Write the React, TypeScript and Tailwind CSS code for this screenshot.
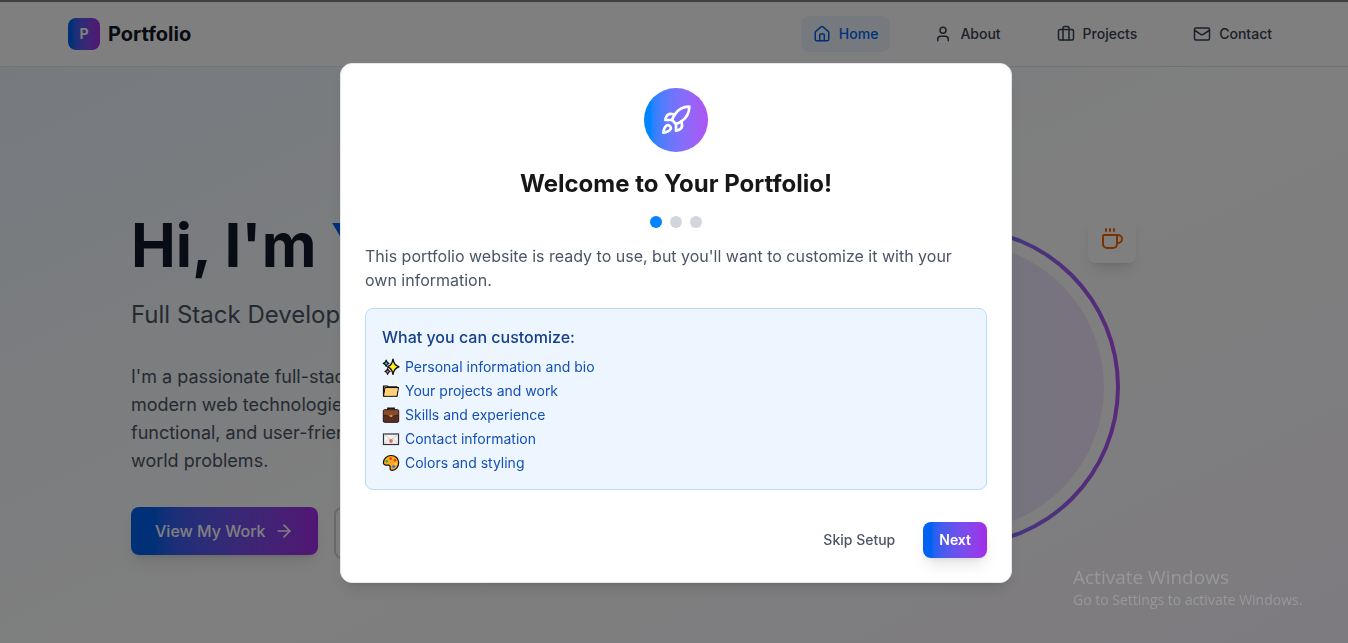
import type { ReactNode } from "react";
import { ArrowRight, Briefcase, Coffee, House, Mail, Rocket, User } from "lucide-react";
import type { LucideIcon } from "lucide-react";

type NavItem = { label: string; href: string; icon: LucideIcon; active?: boolean };

const navItems: NavItem[] = [
  { label: "Home", href: "#home", icon: House, active: true },
  { label: "About", href: "#about", icon: User },
  { label: "Projects", href: "#projects", icon: Briefcase },
  { label: "Contact", href: "#contact", icon: Mail },
];

function Glyph({ children }: { children: ReactNode }) {
  return (
    <svg viewBox="0 0 18 18" className="size-[18px] shrink-0" aria-hidden="true">
      {children}
    </svg>
  );
}

function SparklesGlyph() {
  return (
    <Glyph>
      <path d="M11 1.2c.7 4.6 2 6.500 6 7.600-4 1.100-5.300 3-6 7.600-.7-4.600-2-6.500-5.600-7.600 3.600-1.100 4.900-3 5.600-7.600Z" fill="#ffee1f" stroke="#111" strokeWidth="1.400" strokeLinejoin="round" />
      <path d="M4.200 2.200c.4 2 1 2.700 2.700 3.100-1.700.4-2.300 1.200-2.700 3.100C3.800 6.500 3.100 5.700 1.300 5.300c1.800-.4 2.500-1.100 2.900-3.100Z" fill="#2cc4f0" stroke="#111" strokeWidth="1.200" strokeLinejoin="round" />
      <path d="M5.600 10.600c.4 1.900 1 2.500 2.500 2.900-1.500.4-2.100 1-2.500 2.900-.4-1.900-1.100-2.500-2.700-2.900 1.600-.4 2.300-1 2.700-2.900Z" fill="#f25aa8" stroke="#111" strokeWidth="1.200" strokeLinejoin="round" />
    </Glyph>
  );
}

function FolderGlyph() {
  return (
    <Glyph>
      <path d="M1.500 4h3.800l1 .9h8.700v9.100H1.500Z" fill="#e8a33d" stroke="#111" strokeWidth="1.200" strokeLinejoin="round" />
      <path d="M3 5.600h13.500l-1.600 8.600H1.700Z" fill="#ffd07a" stroke="#111" strokeWidth="1.100" strokeLinejoin="round" />
      <path d="M3.600 6.200h12.200l-1.400 7.400H2.300Z" fill="#ffd07a" />
    </Glyph>
  );
}

function BriefcaseGlyph() {
  return (
    <Glyph>
      <path d="M5.800 4V2.200h6.400V4" fill="none" stroke="#24140f" strokeWidth="1.400" />
      <rect x="1.300" y="3.700" width="15.400" height="12.600" rx="1.200" fill="#5a2d22" stroke="#24140f" strokeWidth="1" />
      <path d="M1.800 4.200h14.400v4.600L9 10.600 1.800 8.800Z" fill="#8a4a2c" />
      <path d="M1.800 9 9 10.800 16.200 9" fill="none" stroke="#3a1a12" strokeWidth=".8" />
      <rect x="7.600" y="9.300" width="2.800" height="1.500" fill="#f7b32b" />
    </Glyph>
  );
}

function EnvelopeGlyph() {
  return (
    <Glyph>
      <rect x="1.500" y="4" width="15" height="10.500" fill="#f4f4f4" stroke="#2f2f2f" strokeWidth="1.200" />
      <path d="m2 4.600 7 5.200 7-5.200M2 14l5-5.500M16 14l-5-5.500" fill="none" stroke="#c4c4c4" strokeWidth=".8" />
      <circle cx="9" cy="11" r="1.900" fill="#f2665c" />
    </Glyph>
  );
}

function PaletteGlyph() {
  return (
    <Glyph>
      <path d="M9.200 1.500c4.300 0 7.500 3 7.500 7.100 0 4.300-3 7.700-6.500 7.700-1.700 0-2.400-1.100-2.100-2.600.3-1.600-.3-2.600-2-2.600-3 .2-4.700-.5-4.700-2.400 0-3.800 3.500-7.200 7.800-7.200Z" fill="#fba91b" stroke="#111" strokeWidth="1.200" />
      <circle cx="4.800" cy="7.200" r="1.300" fill="#2fae4e" />
      <circle cx="8.700" cy="4.600" r="1.300" fill="#e2382f" />
      <circle cx="13" cy="6.300" r="1.300" fill="#e2382f" />
      <circle cx="13.600" cy="9.700" r="1.200" fill="#f9dc4a" />
      <circle cx="11.600" cy="12.500" r="1.500" fill="#2b74e2" />
    </Glyph>
  );
}

const customizations = [
  { label: "Personal information and bio", Icon: SparklesGlyph },
  { label: "Your projects and work", Icon: FolderGlyph },
  { label: "Skills and experience", Icon: BriefcaseGlyph },
  { label: "Contact information", Icon: EnvelopeGlyph },
  { label: "Colors and styling", Icon: PaletteGlyph },
];

function Header() {
  return (
    <header className="border-b border-gray-200 bg-white pl-1">
      <div className="mx-auto flex h-16 max-w-7xl items-center justify-between px-8">
        <a href="#home" className="flex items-center gap-2">
          <span className="flex size-8 items-center justify-center rounded-lg bg-linear-to-r from-[#0062f0] from-13% to-[#a32be8] text-sm font-bold text-white">
            P
          </span>
          <span className="text-xl font-bold text-gray-900">Portfolio</span>
        </a>
        <nav className="flex items-center gap-8" aria-label="Main">
          {navItems.map(({ label, href, icon: Icon, active }) => (
            <a
              key={label}
              href={href}
              aria-current={active ? "page" : undefined}
              className={
                active
                  ? "flex items-center gap-2 rounded-lg bg-[#edf5ff] px-3 py-2 text-sm font-medium text-[#0062f0]"
                  : "flex items-center gap-2 rounded-lg px-3 py-2 text-sm font-medium text-gray-700"
              }
            >
              <Icon size={18} aria-hidden="true" />
              {label}
            </a>
          ))}
        </nav>
      </div>
    </header>
  );
}

function Hero() {
  return (
    <section className="flex min-h-screen items-center bg-linear-to-br from-[#edf5ff] via-white to-purple-50 pb-1 pl-1">
      <div className="mx-auto grid w-full max-w-[1090px] grid-cols-2 items-center gap-[46px]">
        <div>
          <h1 className="mb-6 text-6xl font-bold whitespace-nowrap text-gray-900">
            Hi, I'm{" "}
            <span className="bg-linear-to-r from-[#0062f0] from-13% to-[#a32be8] bg-clip-text text-transparent">Your</span>
          </h1>
          <p className="mb-8 text-2xl text-gray-600">Full Stack Developer</p>
          <p className="mb-8 text-lg leading-7 text-gray-600">
            I'm a passionate full-stack developer who loves building
            <br />
            modern web technologies. I enjoy creating beautiful,
            <br />
            functional, and user-friendly apps that solve real-
            <br />
            world problems.
          </p>
          <div className="flex items-start gap-4">
            <a
              href="#projects"
              className="flex h-12 items-center gap-2 rounded-lg bg-linear-to-r from-[#0062f0] from-13% to-[#a32be8] px-6 font-medium text-white shadow-lg"
            >
              View My Work
              <ArrowRight size={20} aria-hidden="true" />
            </a>
            <a
              href="#contact"
              className="flex items-center rounded-lg border-2 border-gray-300 px-6 py-3 font-medium text-gray-700"
            >
              Contact Me
            </a>
          </div>
        </div>
        <div className="relative mx-auto size-80">
          <div className="size-full rounded-full bg-linear-to-r from-[#0084ff] from-13% to-[#b052f5] p-1">
            <div className="size-full rounded-full bg-white p-3">
              <div className="size-full rounded-full bg-linear-to-r from-[#dbebff] to-[#f3e6ff]" />
            </div>
          </div>
          <div className="absolute -top-3 -right-4 rounded-lg bg-white p-3 shadow-lg">
            <Coffee size={24} className="text-[#f56400]" aria-hidden="true" />
          </div>
        </div>
      </div>
    </section>
  );
}

function WelcomeDialog() {
  return (
    <div className="fixed inset-x-0 top-0.5 -bottom-px z-40 flex items-center justify-center bg-black/50 p-4 pl-5">
      <div
        role="dialog"
        aria-modal="true"
        aria-labelledby="welcome-title"
        className="w-full max-w-2xl rounded-xl border border-gray-200 bg-white p-6 shadow-lg"
      >
        <div className="flex flex-col items-center gap-4">
          <div className="flex size-16 items-center justify-center rounded-full bg-linear-to-r from-[#0084ff] from-10% to-[#b052f5] text-white">
            <Rocket size={32} aria-hidden="true" />
          </div>
          <h2 id="welcome-title" className="text-2xl font-bold text-neutral-900">
            Welcome to Your Portfolio!
          </h2>
          <div className="flex gap-2">
            <span className="size-3 rounded-full bg-[#0084ff]" />
            <span className="size-3 rounded-full bg-gray-300" />
            <span className="size-3 rounded-full bg-gray-300" />
          </div>
        </div>
        <p className="mt-4 text-base text-gray-600">
          This portfolio website is ready to use, but you'll want to customize it with your own information.
        </p>
        <div className="mt-4 rounded-lg border border-[#b8dcff] bg-[#edf5ff] p-4">
          <h3 className="mb-2 font-medium text-[#143f8c]">What you can customize:</h3>
          <ul className="flex flex-col gap-1 text-sm text-[#1450b8]">
            {customizations.map(({ label, Icon }) => (
              <li key={label} className="flex items-center gap-[5px]">
                <Icon />
                {label}
              </li>
            ))}
          </ul>
        </div>
        <div className="mt-8 flex justify-end gap-3 text-sm">
          <button type="button" className="h-9 rounded-lg px-4 font-medium text-gray-600">
            Skip Setup
          </button>
          <button
            type="button"
            className="h-9 rounded-lg bg-linear-to-r from-[#0062f0] from-13% to-[#a32be8] px-4 font-semibold text-white shadow-lg"
          >
            Next
          </button>
        </div>
      </div>
    </div>
  );
}

export default function App() {
  return (
    <div className="h-screen overflow-hidden font-['Inter',sans-serif]">
      <div className="h-0.5 bg-[#404040]" />
      <Header />
      <Hero />
      <WelcomeDialog />
      <aside className="fixed right-8 bottom-[34px] z-50 w-[243px] font-['Open_Sans',sans-serif] text-white/20">
        <p className="text-[19px] leading-7">Activate Windows</p>
        <p className="text-sm leading-[18px]">Go to Settings to activate Windows.</p>
      </aside>
    </div>
  );
}
